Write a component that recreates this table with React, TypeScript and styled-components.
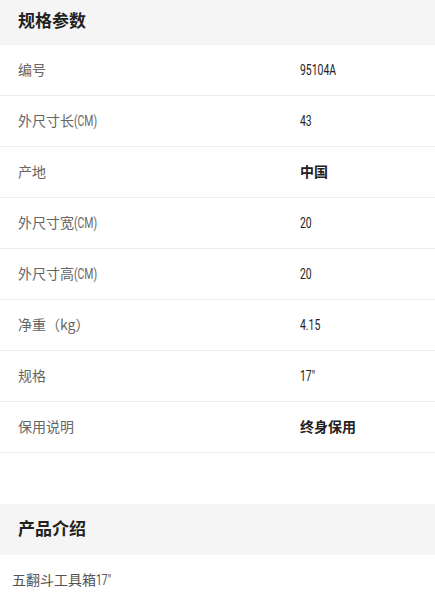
import React from "react";
import styled, { createGlobalStyle } from "styled-components";

const GlobalStyle = createGlobalStyle`
  body {
    margin: 0;
    background: #fff;
    font-family: "Noto Sans CJK SC", "Liberation Sans", sans-serif;
  }
`;

const Page = styled.div`
  width: 435px;
  display: flex;
  flex-direction: column;
`;

const SectionHeader = styled.div<{ $height: number; $lift: number }>`
  height: ${(p) => p.$height}px;
  background: #f5f5f5;
  display: flex;
  align-items: center;
  padding: 0 18px ${(p) => p.$lift}px;
  box-sizing: border-box;
  font-size: 17px;
  font-weight: 700;
  color: #222;
`;

const Table = styled.div`
  display: flex;
  flex-direction: column;
  margin-bottom: 51px;
`;

const Row = styled.div`
  height: 51px;
  display: grid;
  grid-template-columns: 282px 1fr;
  align-items: center;
  padding: 0 0 3px 18px;
  border-bottom: 1px solid #ececec;
  box-sizing: border-box;
`;

const Label = styled.span`
  font-size: 14px;
  color: #666;
`;

// narrow DIN-like digits
const Num = styled.span`
  display: inline-block;
  font-family: "Roboto", "Liberation Sans", sans-serif;
  font-size: 14.5px;
  transform: scaleX(0.72);
  transform-origin: left center;
`;

const Value = styled.span<{ $bold?: boolean }>`
  font-size: 14px;
  color: #222;
  font-weight: ${(p) => (p.$bold ? 700 : 400)};
`;

const Intro = styled.div`
  padding: 14px 12px;
  font-size: 14px;
  color: #555;
`;

const specs: { label: React.ReactNode; value: React.ReactNode; bold?: boolean }[] = [
  { label: "编号", value: <Num>95104A</Num> },
  { label: <>外尺寸长<Num>(CM)</Num></>, value: <Num>43</Num> },
  { label: "产地", value: "中国", bold: true },
  { label: <>外尺寸宽<Num>(CM)</Num></>, value: <Num>20</Num> },
  { label: <>外尺寸高<Num>(CM)</Num></>, value: <Num>20</Num> },
  { label: <>净重（kg）</>, value: <Num>4.15</Num> },
  { label: "规格", value: <Num>17"</Num> },
  { label: "保用说明", value: "终身保用", bold: true },
];

export default function App() {
  return (
    <Page>
      <GlobalStyle />
      <SectionHeader $height={45} $lift={6}>规格参数</SectionHeader>
      <Table>
        {specs.map((s, i) => (
          <Row key={i}>
            <Label>{s.label}</Label>
            <Value $bold={s.bold}>{s.value}</Value>
          </Row>
        ))}
      </Table>
      <SectionHeader $height={51} $lift={4}>产品介绍</SectionHeader>
      <Intro>
        五翻斗工具箱<Num>17"</Num>
      </Intro>
    </Page>
  );
}
